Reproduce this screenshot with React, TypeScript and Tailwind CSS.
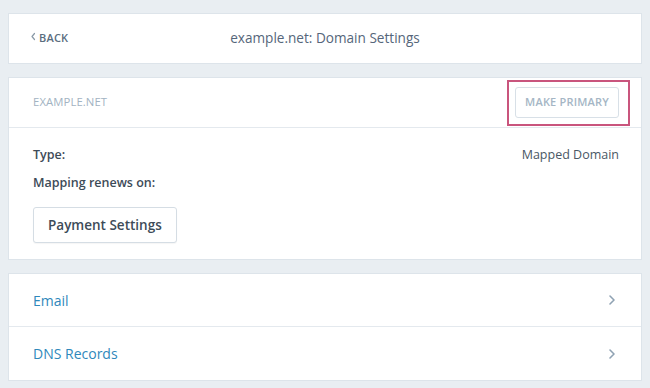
import React from "react";

const font = { fontFamily: '"Open Sans", "Noto Sans", sans-serif' };

function Chevron({ className = "" }: { className?: string }) {
  return (
    <svg width="8" height="12" viewBox="0 0 8 12" className={className} fill="none">
      <path d="M2 2l4 4-4 4" stroke="currentColor" strokeWidth="1.6" strokeLinecap="round" strokeLinejoin="round" />
    </svg>
  );
}

export default function App() {
  return (
    <div style={font} className="w-[650px] h-[388px] bg-[#e9eef2] px-[9px] pt-[14px] overflow-hidden">
      <div className="h-[49px] bg-white shadow-[0_0_0_1px_#dde4ea] grid grid-cols-[1fr_auto_1fr] items-center px-[22px]">
        <div className="flex items-center gap-[4px] text-[#5a6d7e]">
          <svg width="6" height="9" viewBox="0 0 6 9" fill="none" className="-mt-[4px] -ml-[1px]">
            <path d="M4.5 1.5L2 4.5l2.5 3" stroke="#8a9aa8" strokeWidth="1.2" strokeLinecap="round" strokeLinejoin="round" />
          </svg>
          <span className="text-[11px] font-semibold tracking-[0.2px] -ml-[1px]">BACK</span>
        </div>
        <div className="text-[13.6px] text-[#55667a]">example.net: Domain Settings</div>
        <div />
      </div>

      <div className="mt-[15px] bg-white shadow-[0_0_0_1px_#dde4ea]">
        <div className="h-[50px] flex items-center justify-between pl-[24px] pr-[11px] border-b border-[#e4e9ee]">
          <span className="text-[11.3px] text-[#a2b3c2] tracking-[0.1px]">EXAMPLE.NET</span>
          <div className="border-[2.5px] border-[#c9557d] pl-[6px] pr-[9px] py-[5.5px]">
            <button className="h-[31px] px-[9px] rounded-[3px] border border-[#d8e0e7] text-[11px] font-semibold text-[#a5b6c5] tracking-[0.2px] bg-white">
              MAKE PRIMARY
            </button>
          </div>
        </div>
        <div className="px-[24px] pt-[17px] pb-[16px] text-[12.5px]">
          <div className="flex justify-between items-center h-[20px]">
            <span className="font-semibold text-[#3d4b58]">Type:</span>
            <span className="text-[#4a5865] mr-[-2px]">Mapped Domain</span>
          </div>
          <div className="h-[20px] mt-[8px] flex items-center">
            <span className="font-semibold text-[#3d4b58]">Mapping renews on:</span>
          </div>
          <button className="mt-[14px] h-[36px] px-[14px] rounded-[3px] border border-[#d5dde4] shadow-[0_1px_1px_rgba(0,0,0,0.04)] text-[13.5px] font-semibold text-[#3d4b58] bg-white">
            Payment Settings
          </button>
        </div>
      </div>

      <div className="mt-[15px] bg-white shadow-[0_0_0_1px_#dde4ea]">
        <div className="h-[53px] flex items-center justify-between pl-[24px] pr-[25px] border-b border-[#e4e9ee]">
          <span className="text-[14px] text-[#2f88bb]">Email</span>
          <Chevron className="text-[#8fa2b3]" />
        </div>
        <div className="h-[53px] flex items-center justify-between pl-[24px] pr-[25px]">
          <span className="text-[14px] text-[#2f88bb]">DNS Records</span>
          <Chevron className="text-[#8fa2b3]" />
        </div>
      </div>
    </div>
  );
}
